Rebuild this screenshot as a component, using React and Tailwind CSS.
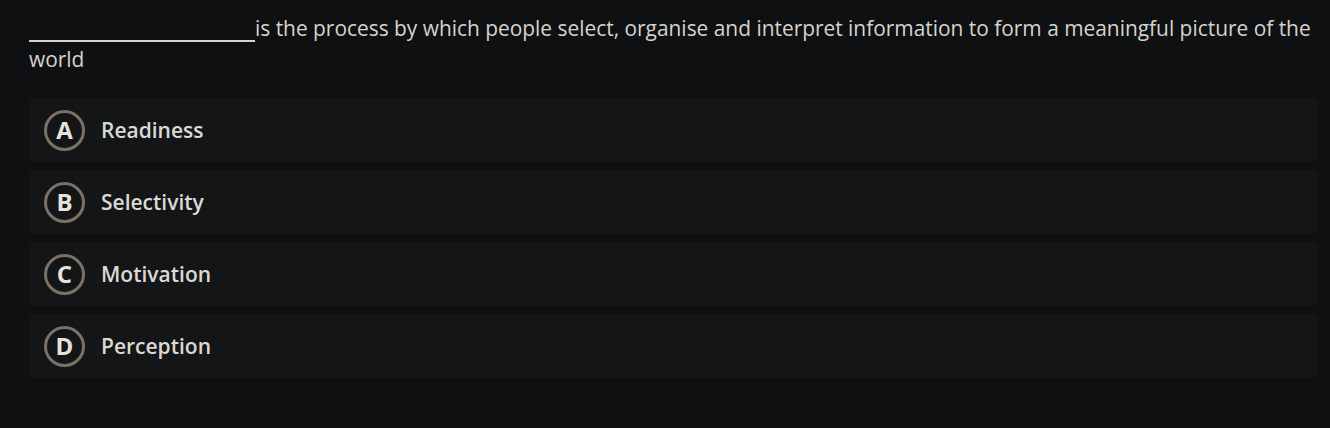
import React from "react";

const options = [
  { key: "A", label: "Readiness" },
  { key: "B", label: "Selectivity" },
  { key: "C", label: "Motivation" },
  { key: "D", label: "Perception" },
];

export default function App() {
  return (
    <div
      className="min-h-[428px] w-full bg-[#0f1012] pt-[13px]"
      style={{ fontFamily: '"Open Sans", sans-serif' }}
    >
      <div className="ml-[29px] w-[1288px]">
        <p className="text-[20.9px] leading-[31px] text-[#d6d3ce]">
          <span className="inline-block w-[226px] border-b-2 border-[#d6d3ce] align-[-6px]"></span>
          is the process by which people select, organise and interpret information to form a meaningful picture of the world
        </p>
        <div className="mt-[23px] flex flex-col gap-2">
          {options.map((o) => (
            <div
              key={o.key}
              className="flex h-16 items-center rounded-[3px] bg-[#141517] pl-[15px]"
            >
              <div className="flex h-[41px] w-[41px] items-center justify-center rounded-full border-[3px] border-[#7b7164] text-[24px] leading-none font-bold text-[#e6e3de]">
                {o.key}
              </div>
              <span className="ml-4 pt-[2px] text-[21px] font-semibold text-[#dcd9d4]">
                {o.label}
              </span>
            </div>
          ))}
        </div>
      </div>
    </div>
  );
}
